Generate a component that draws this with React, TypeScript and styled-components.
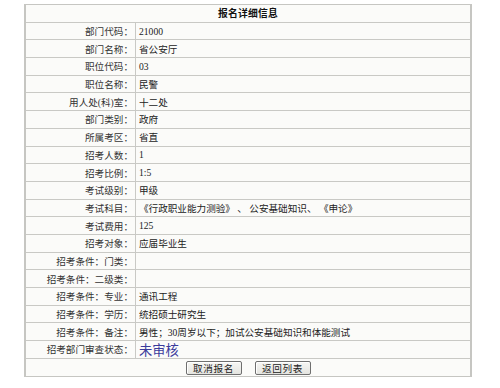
import { Fragment } from "react";
import styled, { createGlobalStyle } from "styled-components";

const GlobalStyle = createGlobalStyle`
  body {
    margin: 0;
    background: #ffffff;
    font-family: "Liberation Serif", "Noto Sans CJK SC", serif;
  }
`

const Page = styled.div`
  padding: 4px 0 0 24px;
`

const Panel = styled.div`
  width: 444px;
  border: 1px solid #c6c6c2;
  border-left-width: 2px;
  border-right-width: 2px;
  background: #fbfbf9;
  display: grid;
  grid-template-columns: 110px 1fr;
  grid-auto-rows: 17.7px;
`

const Title = styled.div`
  grid-column: 1 / -1;
  display: flex;
  align-items: center;
  justify-content: center;
  border-bottom: 1px solid #c9c9c5;
  font-size: 9.8px;
  font-weight: bold;
  color: #111;
  letter-spacing: 0.2px;
`

const Label = styled.div`
  display: flex;
  align-items: center;
  justify-content: flex-end;
  padding-right: 2px;
  border-right: 1px solid #c9c9c5;
  border-bottom: 1px solid #c9c9c5;
  font-size: 9.6px;
  color: #333;
  white-space: nowrap;
`

const Value = styled.div<{ $status?: boolean }>`
  display: flex;
  align-items: center;
  padding-left: 3px;
  border-bottom: 1px solid #c9c9c5;
  font-size: ${p => (p.$status ? "13.3px" : "9.6px")};
  color: ${p => (p.$status ? "#3b3b9c" : "#222")};
  white-space: nowrap;
`

const Actions = styled.div`
  grid-column: 1 / -1;
  height: 19px;
  display: flex;
  align-items: center;
  justify-content: center;
  gap: 13px;
`

const Button = styled.button`
  width: 56px;
  height: 14px;
  padding: 0;
  border: 1px solid #6f6f6f;
  border-radius: 2px;
  background: linear-gradient(#f6f6f4, #e4e4e0);
  box-shadow: inset 1px 1px 0 #ffffff;
  font-family: "Noto Sans CJK SC", sans-serif;
  font-size: 9.6px;
  line-height: 12px;
  color: #222;
  letter-spacing: 0.6px;
`

const rows: [string, string][] = [
  ["部门代码：", "21000"],
  ["部门名称：", "省公安厅"],
  ["职位代码：", "03"],
  ["职位名称：", "民警"],
  ["用人处(科)室：", "十二处"],
  ["部门类别：", "政府"],
  ["所属考区：", "省直"],
  ["招考人数：", "1"],
  ["招考比例：", "1:5"],
  ["考试级别：", "甲级"],
  ["考试科目：", "《行政职业能力测验》 、 公安基础知识、 《申论》"],
  ["考试费用：", "125"],
  ["招考对象：", "应届毕业生"],
  ["招考条件：门类：", ""],
  ["招考条件：二级类：", ""],
  ["招考条件：专业：", "通讯工程"],
  ["招考条件：学历：", "统招硕士研究生"],
  ["招考条件：备注：", "男性；30周岁以下；加试公安基础知识和体能测试"],
]

export default function App() {
  return (
    <Page>
      <GlobalStyle />
      <Panel>
        <Title>报名详细信息</Title>
        {rows.map(([label, value]) => (
          <Fragment key={label}>
            <Label>{label}</Label>
            <Value>{value}</Value>
          </Fragment>
        ))}
        <Label>招考部门审查状态：</Label>
        <Value $status>未审核</Value>
        <Actions>
          <Button>取消报名</Button>
          <Button>返回列表</Button>
        </Actions>
      </Panel>
    </Page>
  );
}
